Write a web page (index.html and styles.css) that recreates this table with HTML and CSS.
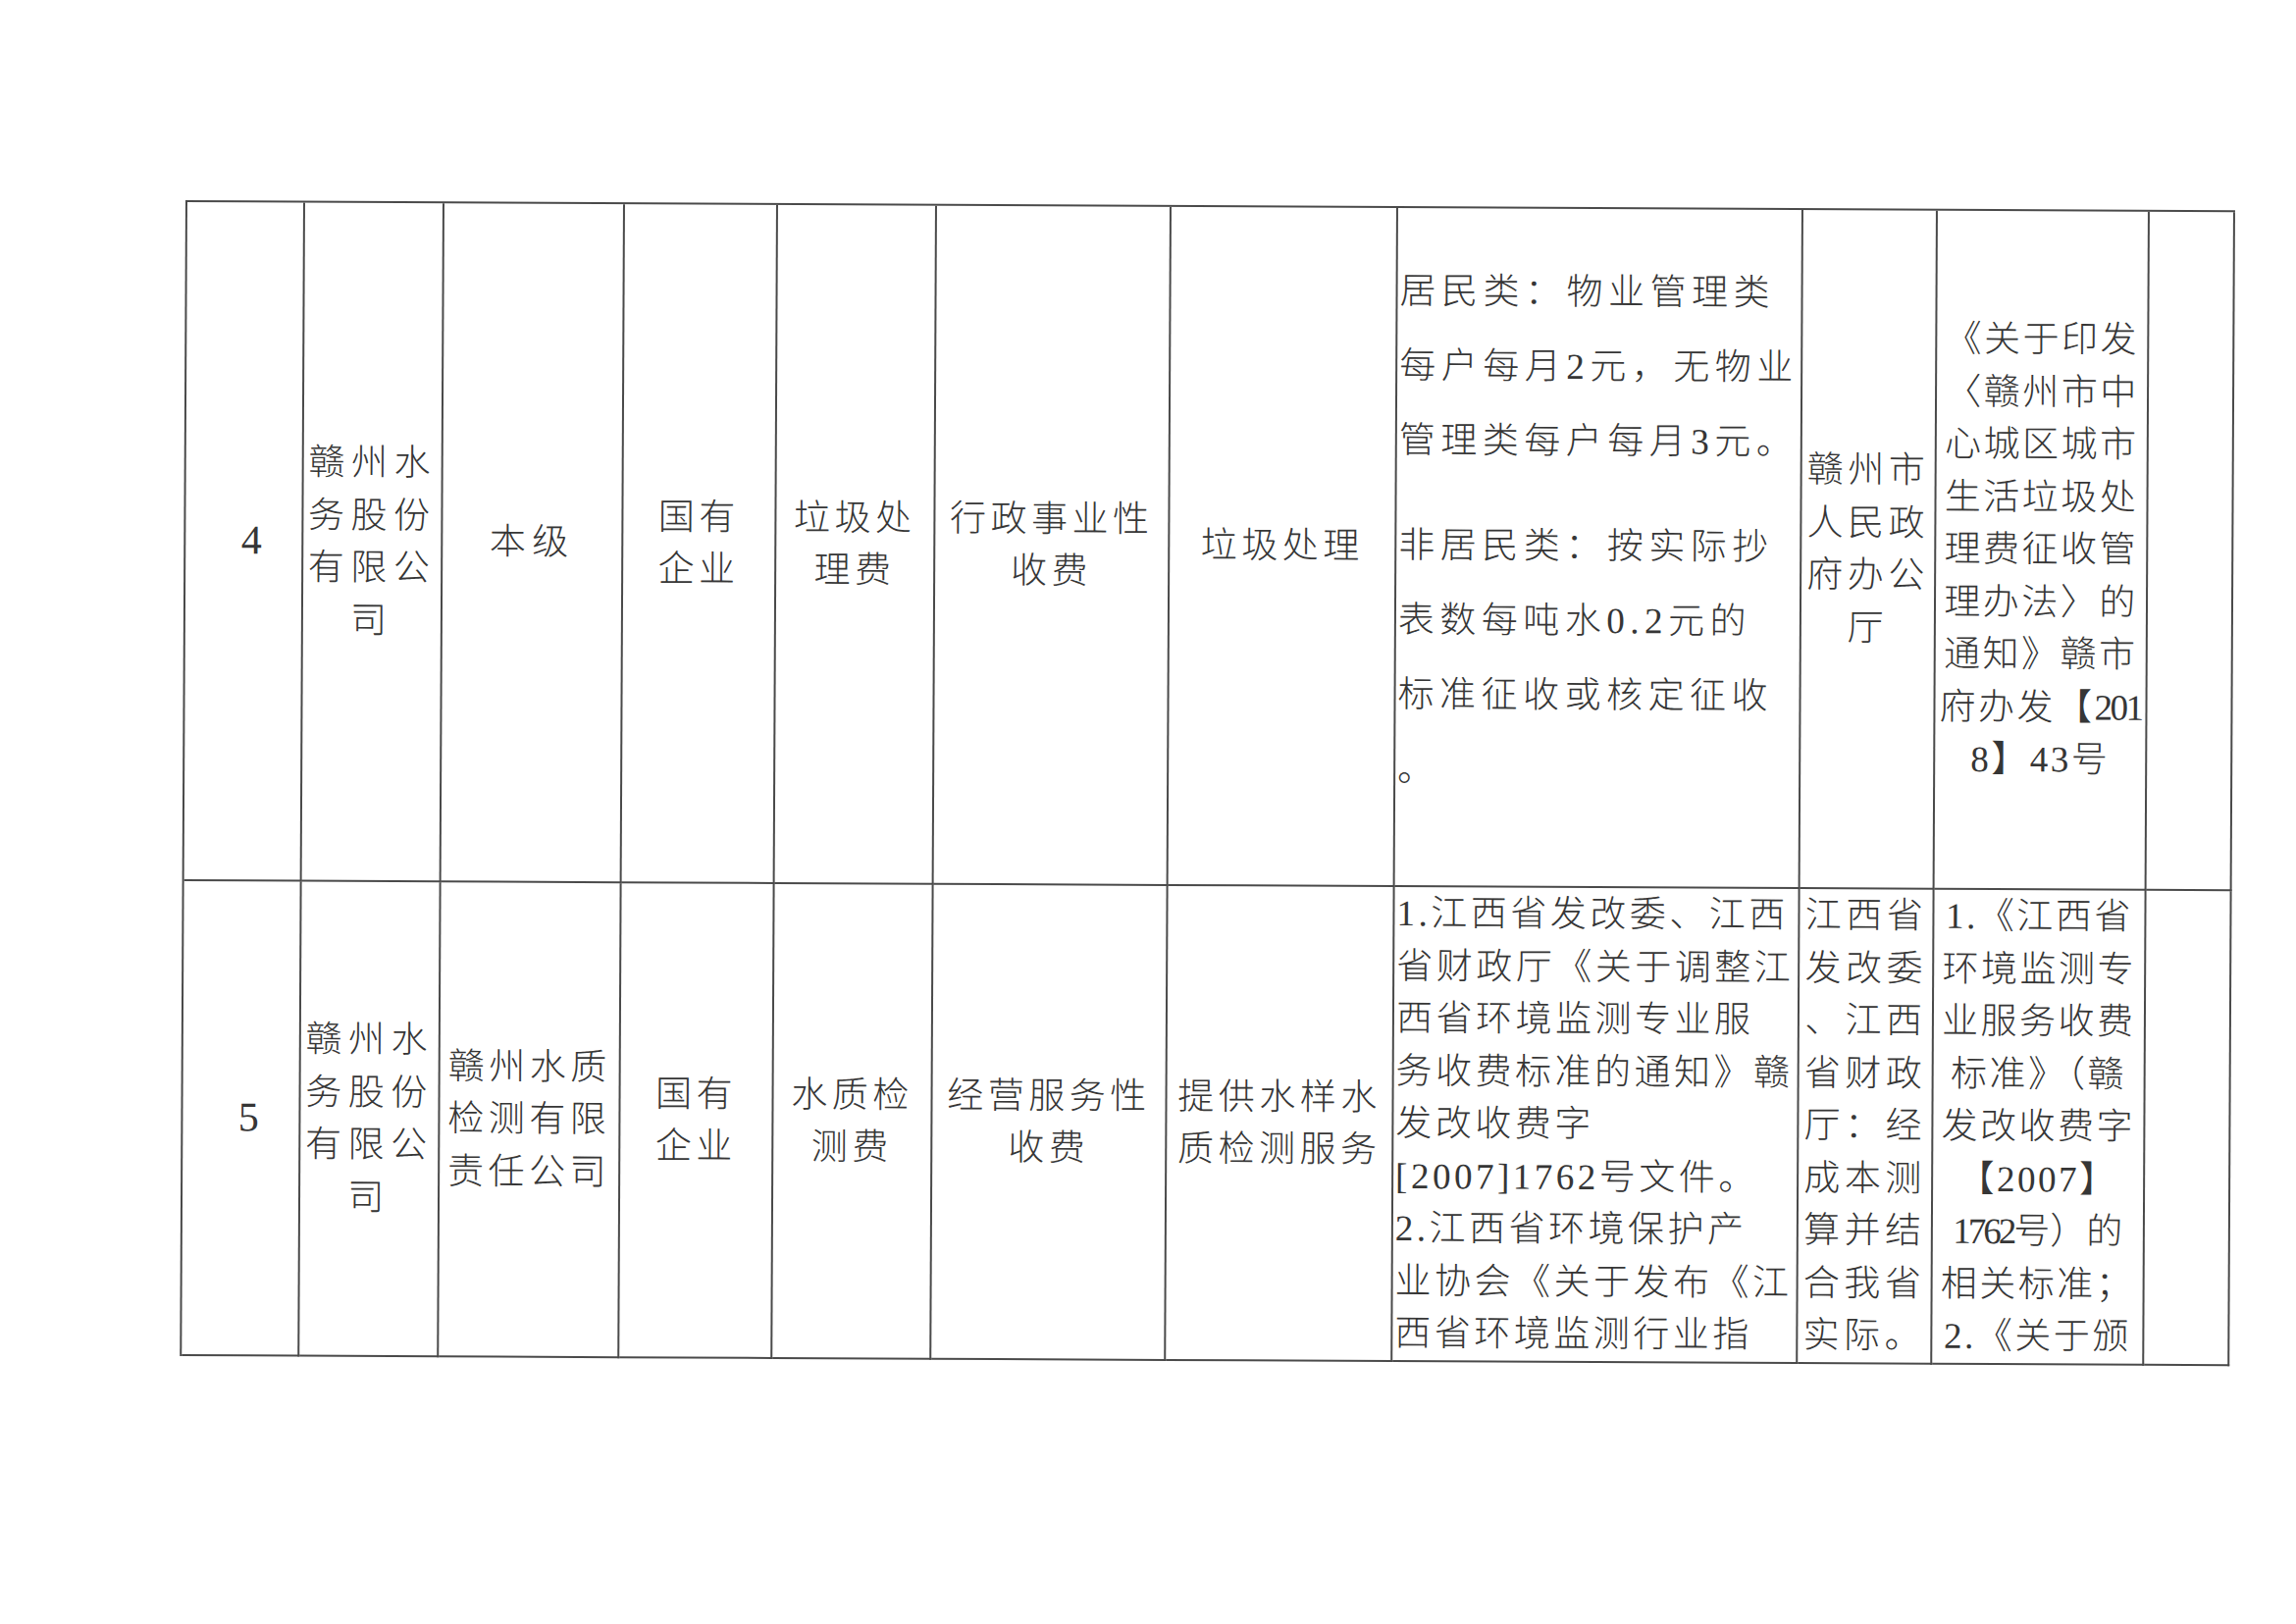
FILE: index.html
```html
<!DOCTYPE html>
<html lang="zh-CN">
<head>
<meta charset="utf-8">
<title>收费目录</title>
<link rel="stylesheet" href="styles.css">
</head>
<body>
<div class="page">
  <div class="sheet">
    <!-- row 4 -->
    <div class="cell num"><div class="txt">4</div></div>
    <div class="cell loose"><div class="txt">赣州水<br>务股份<br>有限公<br>司</div></div>
    <div class="cell loose"><div class="txt">本级</div></div>
    <div class="cell"><div class="txt">国有<br>企业</div></div>
    <div class="cell"><div class="txt">垃圾处<br>理费</div></div>
    <div class="cell"><div class="txt">行政事业性<br>收费</div></div>
    <div class="cell"><div class="txt">垃圾处理</div></div>
    <div class="cell left notes">
      <div class="txt">
        <p class="para">居民类：物业管理类<br>每户每月2元，无物业<br>管理类每户每月3元。</p>
        <p class="para gap">非居民类：按实际抄<br>表数每吨水0.2元的<br>标准征收或核定征收<br>。</p>
      </div>
    </div>
    <div class="cell"><div class="txt">赣州市<br>人民政<br>府办公<br>厅</div></div>
    <div class="cell doc"><div class="txt">《关于印发<br>〈赣州市中<br>心城区城市<br>生活垃圾处<br>理费征收管<br>理办法〉的<br>通知》赣市<br>府办发【<span class="dg">201</span><br>8】43号</div></div>
    <div class="cell"></div>

    <!-- row 5 -->
    <div class="cell num"><div class="txt">5</div></div>
    <div class="cell loose"><div class="txt">赣州水<br>务股份<br>有限公<br>司</div></div>
    <div class="cell"><div class="txt">赣州水质<br>检测有限<br>责任公司</div></div>
    <div class="cell"><div class="txt">国有<br>企业</div></div>
    <div class="cell"><div class="txt">水质检<br>测费</div></div>
    <div class="cell"><div class="txt">经营服务性<br>收费</div></div>
    <div class="cell"><div class="txt">提供水样水<br>质检测服务</div></div>
    <div class="cell left top basis"><div class="txt">1.江西省发改委、江西<br>省财政厅《关于调整江<br>西省环境监测专业服<br>务收费标准的通知》赣<br>发改收费字<br>[2007]1762号文件。<br>2.江西省环境保护产<br>业协会《关于发布《江<br>西省环境监测行业指</div></div>
    <div class="cell top"><div class="txt">江西省<br>发改委<br>、江西<br>省财政<br>厅：经<br>成本测<br>算并结<br>合我省<br>实际。</div></div>
    <div class="cell top doc"><div class="txt">1.《江西省<br>环境监测专<br>业服务收费<br>标准》（赣<br>发改收费字<br>【2007】<br><span class="flat"><span class="dg">1762</span>号）的</span><br>相关标准；<br>2.《关于颁</div></div>
    <div class="cell"></div>
  </div>
</div>
</body>
</html>
```

FILE: styles.css
```css
html, body {
  margin: 0;
  padding: 0;
  background: #ffffff;
}

.page {
  width: 2340px;
  height: 1655px;
  box-sizing: border-box;
  padding: 204px 0 0 189px;
  overflow: hidden;
  font-family: "Liberation Serif", "Noto Sans CJK SC", serif;
  font-weight: 300;
  color: #363636;
}

.sheet {
  display: grid;
  grid-template-columns: 120px 142px 184px 156px 162px 239px 231px 413px 137px 216px 87px;
  grid-template-rows: 692px 484px;
  width: max-content;
  border-top: 2px solid #4a4a4a;
  border-left: 2px solid #4a4a4a;
  transform: rotate(0.28deg);
  transform-origin: 0 0;
}

.cell {
  box-sizing: border-box;
  border-right: 2px solid #4a4a4a;
  border-bottom: 2px solid #4a4a4a;
  overflow: hidden;
  display: flex;
  flex-direction: column;
  justify-content: center;
  align-items: center;
  text-align: center;
  font-size: 37px;
  line-height: 53.5px;
  letter-spacing: 4.5px;
  white-space: nowrap;
}

.txt {
  flex: none;
}

.cell.loose {
  letter-spacing: 6.5px;
}

.cell.num {
  font-size: 42px;
  letter-spacing: 0;
  padding-left: 16px;
}

.cell.notes {
  letter-spacing: 5.5px;
  padding-bottom: 34px;
}

.cell.basis {
  letter-spacing: 3.5px;
}

.cell.doc {
  letter-spacing: 2.5px;
}

.cell.left {
  align-items: flex-start;
  text-align: left;
  padding-left: 2px;
}

.cell.top {
  justify-content: flex-start;
  padding-top: 0;
}

.dg {
  letter-spacing: -2.5px;
}

.flat {
  letter-spacing: 0;
}

.flat .dg {
  letter-spacing: -3px;
}

.para {
  margin: 0;
  line-height: 76px;
}

.para.gap {
  margin-top: 31px;
}
```
